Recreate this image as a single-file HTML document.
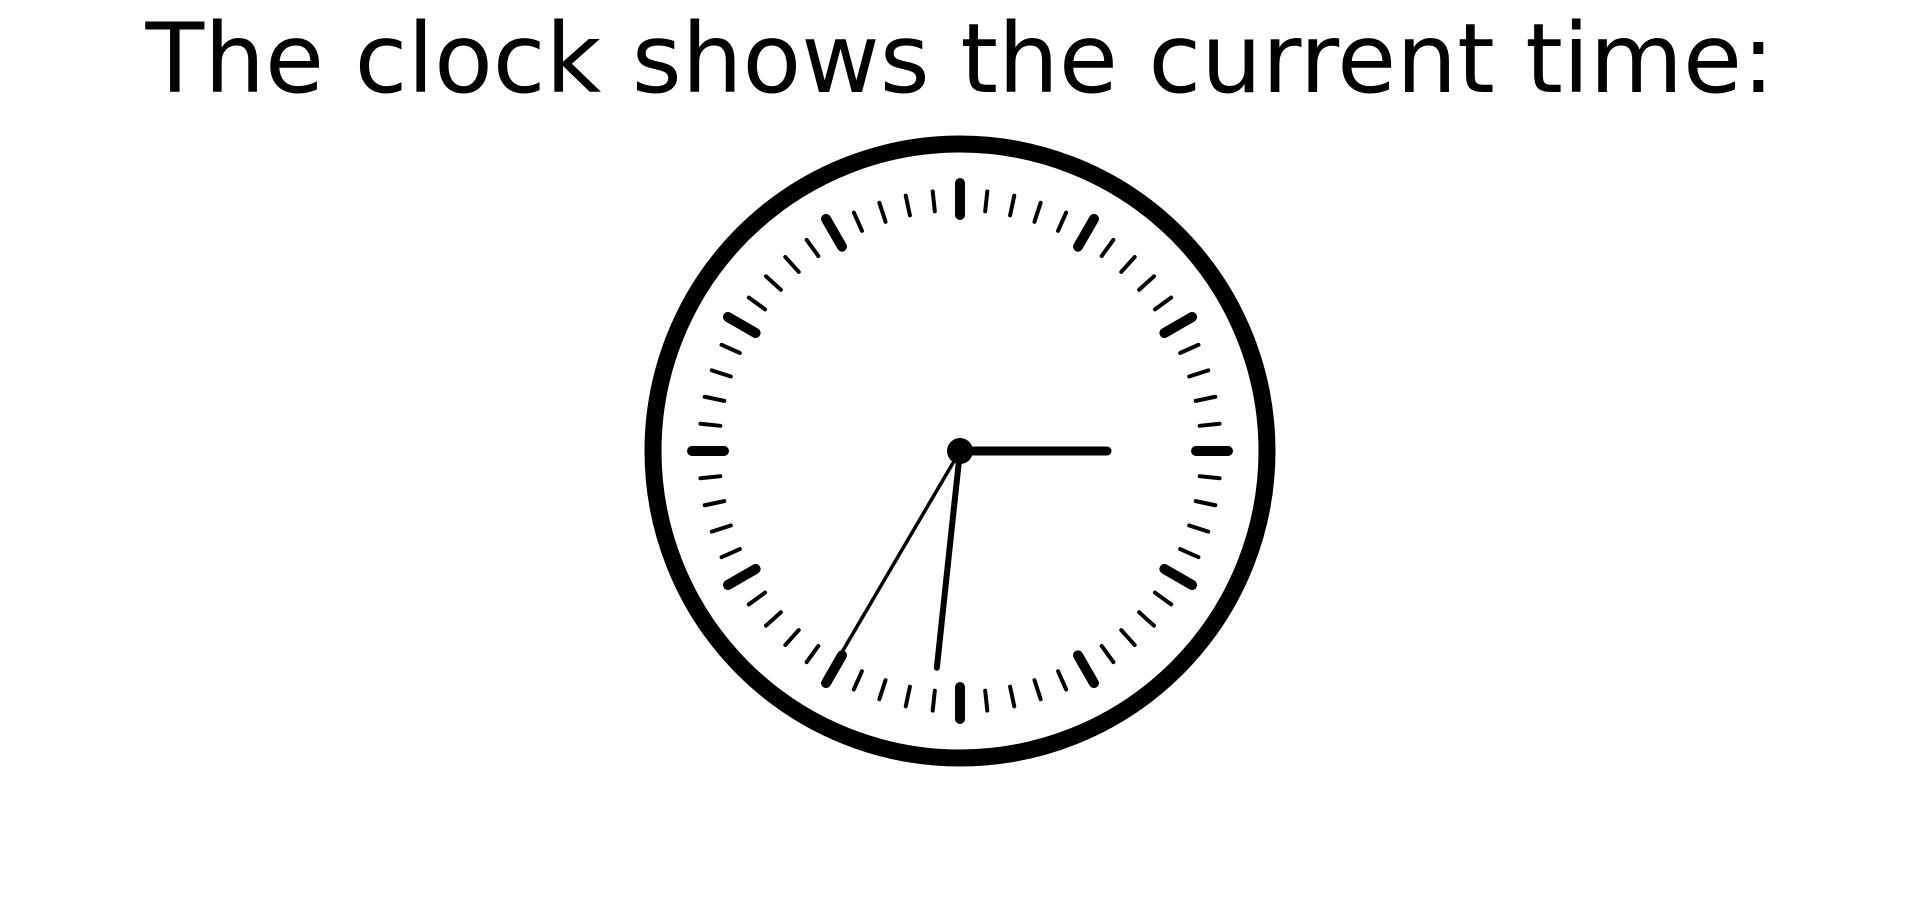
<!DOCTYPE html>
<html><head><style>
html,body{margin:0;padding:0;background:#fff;width:1920px;height:903px;overflow:hidden}
.t{position:absolute;left:0;width:1920px;top:4px;text-align:center;font-family:"DejaVu Sans","Liberation Sans",sans-serif;font-size:96px;line-height:110px;color:#000}
svg{position:absolute;left:0;top:0}
</style></head><body>
<div class="t">The clock shows the current time:</div>
<svg width="1920" height="903" viewBox="0 0 1920 903">
<circle cx="960" cy="451" r="307" fill="none" stroke="#000" stroke-width="17"/>
<g id="ticks" stroke="#000" stroke-linecap="round"></g>
<g stroke="#000" stroke-linecap="round">
<line x1="960" y1="451" x2="1107" y2="451" stroke-width="9"/>
<line x1="960" y1="451" x2="960" y2="669" stroke-width="6" transform="rotate(6.1 960 451)"/>
<line x1="960" y1="451" x2="960" y2="686" stroke-width="3.5" transform="rotate(30.4 960 451)"/>
</g>
<circle cx="960" cy="451" r="13" fill="#000"/>
</svg>
<script>
var g=document.getElementById('ticks'),s='';
for(var i=0;i<60;i++){var h=i%5==0;var r1=h?236:241,r2=h?268:261,a=i*6*Math.PI/180;
s+='<line x1="'+(960+r1*Math.sin(a))+'" y1="'+(451-r1*Math.cos(a))+'" x2="'+(960+r2*Math.sin(a))+'" y2="'+(451-r2*Math.cos(a))+'" stroke-width="'+(h?10:4)+'"/>';}
g.innerHTML=s;
</script>
</body></html>
